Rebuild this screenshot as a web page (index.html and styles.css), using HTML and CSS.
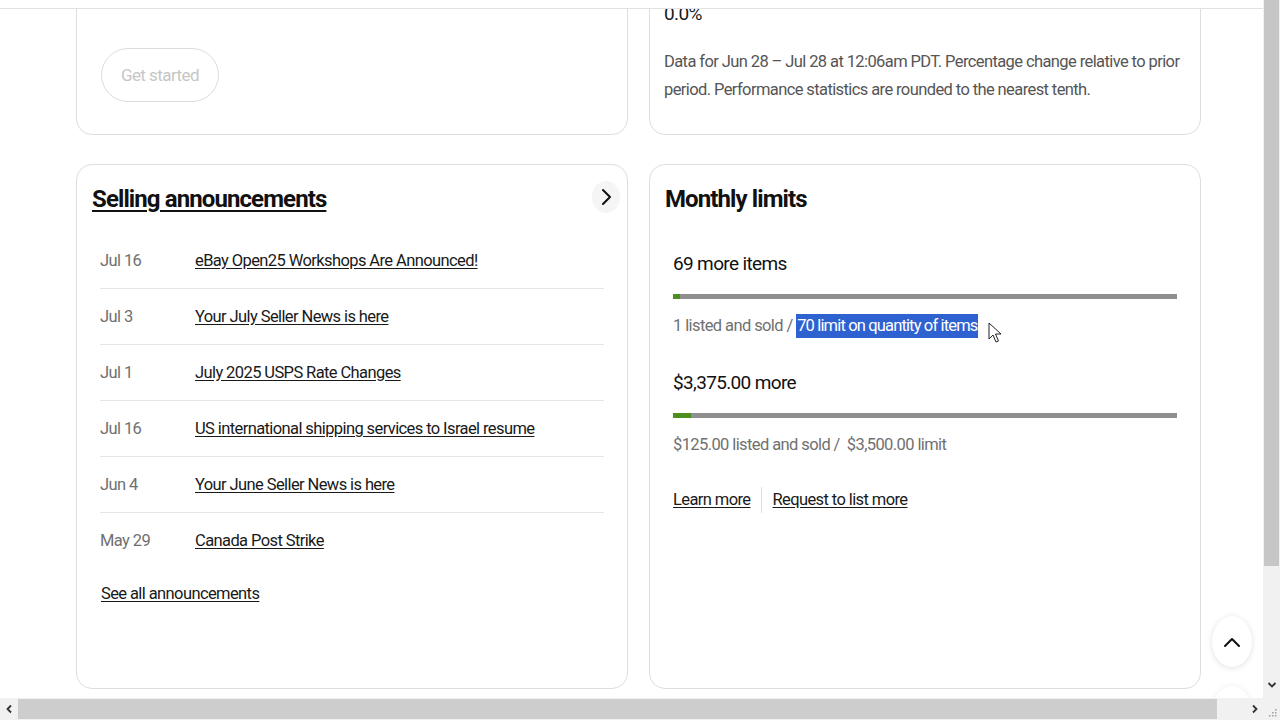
FILE: index.html
```html
<!DOCTYPE html>
<html lang="en">
<head>
<meta charset="utf-8">
<title>Seller Hub</title>
<link rel="stylesheet" href="styles.css">
</head>
<body>
<div class="screen">
  <div class="viewport">
    <div class="page">
      <div class="grid">
        <section class="card card-top card-intro">
          <p class="intro-text">Keep progressing with your listings</p>
          <button class="btn-outline" type="button">Get started</button>
        </section>

        <section class="card card-top card-stats">
          <div class="stat-value">0.0%</div>
          <p class="stat-note">Data for Jun 28 – Jul 28 at 12:06am PDT. Percentage change relative to prior period. Performance statistics are rounded to the nearest tenth.</p>
        </section>

        <section class="card card-main">
          <header class="card-head">
            <h2 class="card-title"><a href="#">Selling announcements</a></h2>
            <button class="icon-btn" type="button" aria-label="Next">
              <svg width="14" height="18" viewBox="0 0 14 18"><path d="M4 2 L11 9 L4 16" fill="none" stroke="#111" stroke-width="2" stroke-linecap="round" stroke-linejoin="round"/></svg>
            </button>
          </header>
          <ul class="ann-list">
            <li class="ann-row"><span class="ann-date">Jul 16</span><a class="ann-link" href="#">eBay Open25 Workshops Are Announced!</a></li>
            <li class="ann-row"><span class="ann-date">Jul 3</span><a class="ann-link" href="#">Your July Seller News is here</a></li>
            <li class="ann-row"><span class="ann-date">Jul 1</span><a class="ann-link" href="#">July 2025 USPS Rate Changes</a></li>
            <li class="ann-row"><span class="ann-date">Jul 16</span><a class="ann-link" href="#">US international shipping services to Israel resume</a></li>
            <li class="ann-row"><span class="ann-date">Jun 4</span><a class="ann-link" href="#">Your June Seller News is here</a></li>
            <li class="ann-row"><span class="ann-date">May 29</span><a class="ann-link" href="#">Canada Post Strike</a></li>
          </ul>
          <a class="see-all" href="#">See all announcements</a>
        </section>

        <section class="card card-main">
          <header class="card-head">
            <h2 class="card-title">Monthly limits</h2>
          </header>
          <div class="limits">
            <div class="limit">
              <div class="limit-amount">69 more items</div>
              <div class="bar"><div class="bar-fill" style="width:1.43%"></div></div>
              <div class="limit-sub">1 listed and sold / <span class="sel">70 limit on quantity of items</span></div>
            </div>
            <div class="limit">
              <div class="limit-amount">$3,375.00 more</div>
              <div class="bar"><div class="bar-fill" style="width:3.57%"></div></div>
              <div class="limit-sub">$125.00 listed and sold / &nbsp;$3,500.00 limit</div>
            </div>
            <div class="limit-links">
              <a href="#">Learn more</a>
              <span class="divider"></span>
              <a href="#">Request to list more</a>
            </div>
          </div>
        </section>
      </div>
    </div>

    <div class="sticky-head"></div>

    <button class="to-top" type="button" aria-label="Back to top">
      <svg width="18" height="12" viewBox="0 0 18 12"><path d="M2 10 L9 3 L16 10" fill="none" stroke="#111" stroke-width="2" stroke-linecap="round" stroke-linejoin="round"/></svg>
    </button>
    <div class="fab-ghost"></div>

    <svg class="cursor" width="14" height="22" viewBox="0 0 14 22"><path d="M1 1 L1 17 L5 13 L8 20 L10.5 19 L7.5 12 L13 12 Z" fill="#fff" stroke="#222" stroke-width="1" stroke-linejoin="round"/></svg>
  </div>

  <div class="vscroll">
    <div class="vthumb"></div>
    <div class="varrow">
      <svg width="10" height="8" viewBox="0 0 10 8"><path d="M1.5 2 L5 5.5 L8.5 2" fill="none" stroke="#333" stroke-width="1.8"/></svg>
    </div>
  </div>

  <div class="hscroll">
    <div class="harrow">
      <svg width="8" height="10" viewBox="0 0 8 10"><path d="M6 1.5 L2.5 5 L6 8.5" fill="none" stroke="#333" stroke-width="1.8"/></svg>
    </div>
    <div class="htrack"><div class="hthumb"></div></div>
    <div class="harrow">
      <svg width="8" height="10" viewBox="0 0 8 10"><path d="M2 1.5 L5.5 5 L2 8.5" fill="none" stroke="#333" stroke-width="1.8"/></svg>
    </div>
  </div>

  <div class="corner">
    <svg width="10" height="10" viewBox="0 0 10 10"><g fill="#a0a0a0"><rect x="7" y="1" width="1.5" height="1.5"/><rect x="4" y="4" width="1.5" height="1.5"/><rect x="7" y="4" width="1.5" height="1.5"/><rect x="1" y="7" width="1.5" height="1.5"/><rect x="4" y="7" width="1.5" height="1.5"/><rect x="7" y="7" width="1.5" height="1.5"/></g></svg>
  </div>
</div>
</body>
</html>
```

FILE: styles.css
```css
* { box-sizing: border-box; }

html, body {
  margin: 0;
  padding: 0;
  width: 1280px;
  height: 720px;
  overflow: hidden;
  background: #fff;
}

body {
  font-family: Roboto, "Liberation Sans", sans-serif;
  color: #191919;
  font-size: 16.5px;
  letter-spacing: -0.6px;
}

a { color: #191919; text-decoration: underline; text-underline-offset: 2px; }

.screen {
  display: grid;
  grid-template-columns: 1263px 17px;
  grid-template-rows: 698px 22px;
  width: 1280px;
  height: 720px;
}

.viewport {
  position: relative;
  overflow: hidden;
  background: #fff;
}

.page {
  padding: 0 63px 0 76px;
}

.grid {
  display: grid;
  grid-template-columns: 552px 552px;
  grid-template-rows: 195px 525px;
  column-gap: 21px;
  row-gap: 29px;
  margin-top: -60px;
}

.card {
  border: 1px solid #dedede;
  border-radius: 16px;
  background: #fff;
}

.card-top {
  display: flex;
  flex-direction: column;
  justify-content: flex-end;
}

.card-intro {
  padding: 0 24px 32px 24px;
  align-items: flex-start;
}

.intro-text {
  margin: 0 0 36px;
  line-height: 24px;
}

.btn-outline {
  height: 54px;
  width: 118px;
  border: 1px solid #dcdcdc;
  border-radius: 27px;
  background: #fff;
  color: #c6c6c6;
  font-family: inherit;
  font-size: 17px;
  letter-spacing: -0.55px;
  padding: 0;
}

.card-stats {
  padding: 0 12px 30px 14px;
}

.stat-value {
  font-size: 19px;
  line-height: 28px;
}

.stat-note {
  margin: 20px 0 0;
  line-height: 28px;
  color: #555;
}

.card-main {
  padding: 16px 15px;
}

.card-head {
  display: flex;
  align-items: center;
  justify-content: space-between;
  height: 36px;
}

.card-title {
  margin: 0;
  font-size: 24px;
  line-height: 36px;
  font-weight: 700;
  letter-spacing: -0.9px;
  color: #111;
}

.card-title a { color: #111; text-underline-offset: 3px; text-decoration-thickness: 2px; }

.icon-btn {
  width: 28px;
  height: 32px;
  border: none;
  border-radius: 50%;
  background: #f5f5f5;
  margin-right: -8px;
  margin-top: -5px;
  padding: 0;
  display: flex;
  align-items: center;
  justify-content: center;
}

.ann-list {
  list-style: none;
  margin: 16px 8px 0;
  padding: 0;
}

.ann-row {
  display: flex;
  padding: 16px 0;
  line-height: 23px;
  border-bottom: 1px solid #e5e5e5;
}

.ann-row:last-child { border-bottom: none; }

.ann-date {
  width: 95px;
  flex: none;
  color: #707070;
}

.see-all {
  display: inline-block;
  margin: 14px 0 0 9px;
  line-height: 24px;
}

.limits {
  margin: 0 8px;
}

.limit { margin-top: 33px; }
.limit + .limit { margin-top: 31px; }

.limit-amount {
  font-size: 19px;
  line-height: 28px;
  letter-spacing: -0.65px;
  color: #111;
}

.bar {
  margin-top: 16px;
  height: 5px;
  background: #8f8f8f;
}

.bar-fill {
  height: 100%;
  background: #4b901d;
}

.limit-sub {
  margin-top: 15px;
  line-height: 24px;
  color: #707070;
}

.sel {
  background: #2f62d1;
  color: #fff;
  letter-spacing: -0.85px;
  padding: 0 1px;
  display: inline-block;
  line-height: 24px;
}

.limit-links {
  margin-top: 30px;
  display: flex;
  align-items: center;
  line-height: 24px;
}

.divider {
  width: 1px;
  height: 26px;
  background: #e0e0e0;
  margin: 0 10px 0 11px;
}

.sticky-head {
  position: absolute;
  left: 0;
  top: 0;
  width: 100%;
  height: 9px;
  background: #fff;
  border-bottom: 1px solid #e2e2e2;
}

.to-top {
  position: absolute;
  left: 1212px;
  top: 616px;
  width: 40px;
  height: 51px;
  border-radius: 50%;
  border: none;
  background: #fff;
  box-shadow: 0 1px 6px rgba(0, 0, 0, 0.12);
  display: flex;
  align-items: center;
  justify-content: center;
  padding: 0;
}

.fab-ghost {
  position: absolute;
  left: 1212px;
  top: 686px;
  width: 40px;
  height: 51px;
  border-radius: 50%;
  background: #fff;
  box-shadow: 0 1px 6px rgba(0, 0, 0, 0.10);
}

.cursor {
  position: absolute;
  left: 988px;
  top: 322px;
}

.vscroll {
  background: #f1f1f1;
  display: flex;
  flex-direction: column;
  justify-content: space-between;
}

.vthumb {
  height: 566px;
  background: #c6c6c6;
  margin: 0 1px 0 1px;
}

.varrow {
  height: 22px;
  display: flex;
  align-items: center;
  justify-content: center;
  margin-bottom: 2px;
}

.hscroll {
  background: #f1f1f1;
  display: flex;
  align-items: stretch;
}

.harrow {
  width: 17px;
  flex: none;
  display: flex;
  align-items: center;
  justify-content: center;
}

.htrack {
  flex: 1;
  padding: 1px 28px 1px 1px;
  display: flex;
}

.hthumb {
  width: 1199px;
  background: #cdcdcd;
}

.corner {
  background: #f1f1f1;
  display: flex;
  align-items: flex-end;
  justify-content: flex-end;
  padding: 0 2px 2px 0;
}
```
